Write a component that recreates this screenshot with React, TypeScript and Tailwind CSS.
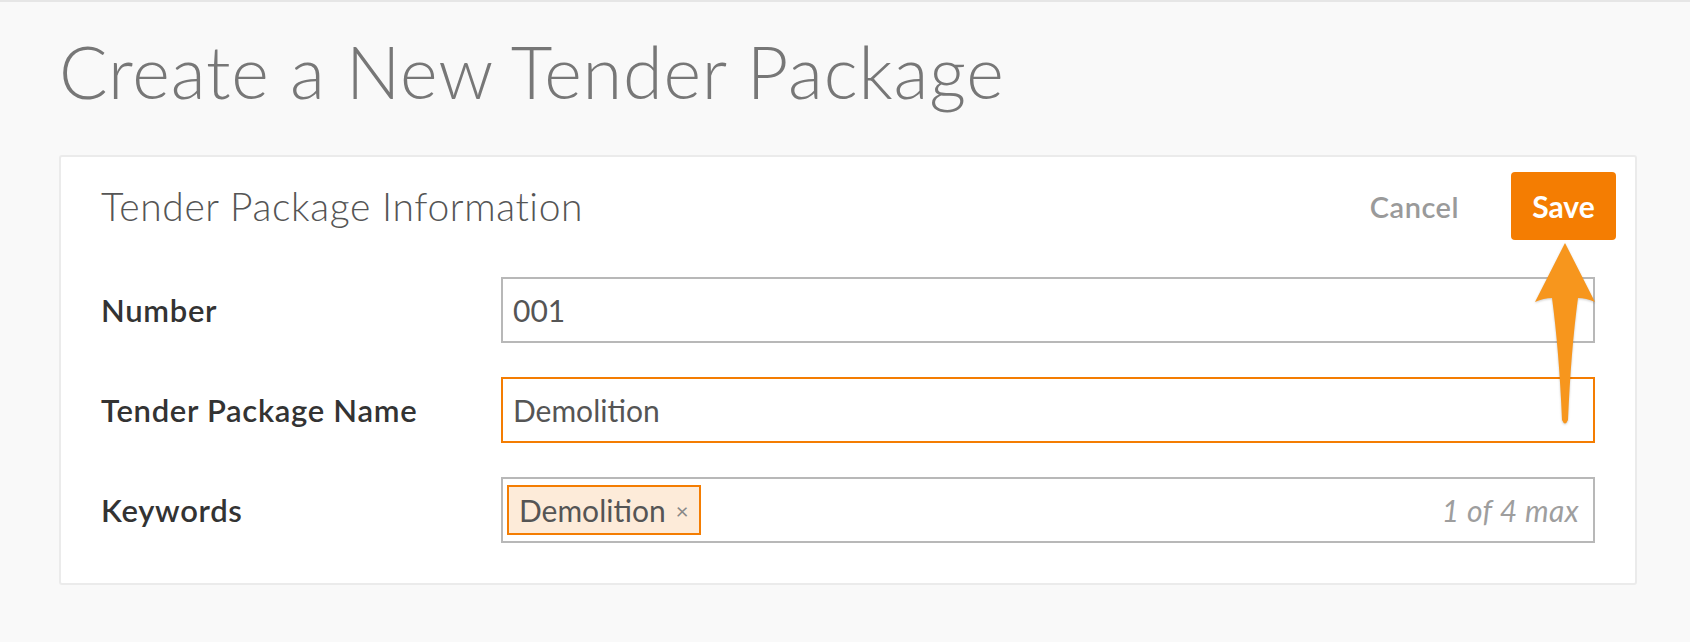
import React from 'react';

const font = { fontFamily: 'Lato, "Open Sans", sans-serif' };

const SaveArrow = () => (
  <svg
    width="70"
    height="190"
    viewBox="0 0 70 190"
    className="absolute left-[1469px] top-[83px] drop-shadow-[0_1px_1px_rgba(0,0,0,0.2)]"
  >
    <path
      d="M35 3 L65 62 Q56 58 48 58 Q41 110 38 180 Q35 187 32 180 Q29 110 22 58 Q14 58 5 62 Z"
      fill="#f7961d"
    />
  </svg>
);

const Row = ({ label, children }: { label: string; children: React.ReactNode }) => (
  <div className="grid grid-cols-[400px_1fr] items-center">
    <span className="text-[31px] leading-none font-semibold tracking-[0.7px] text-[#333]">{label}</span>
    {children}
  </div>
);

export default function App() {
  return (
    <div className="min-h-[642px] bg-[#f9f9f9] border-t-2 border-[#e6e6e6] pl-[59px]" style={font}>
      <h1 className="mt-[33px] h-[72px] text-[72px] leading-none font-light tracking-[0.8px] text-[#777]">
        Create a New Tender Package
      </h1>

      <div className="relative mt-[48px] w-[1578px] bg-white border-2 border-[#ebebeb] rounded-[3px] pb-[40px]">
        <SaveArrow />

        {/* header */}
        <div className="flex items-center pl-[40px] pr-[19px] pt-[15px]">
          <h2 className="text-[39px] leading-none font-light tracking-[0.6px] text-[#555]">
            Tender Package Information
          </h2>
          <button className="ml-auto text-[29px] leading-none font-semibold tracking-[0.5px] text-[#9a9a9a]">
            Cancel
          </button>
          <button className="ml-[52px] w-[105px] h-[68px] rounded-[4px] bg-[#f47d02] text-white text-[30px] leading-none font-bold">
            Save
          </button>
        </div>

        {/* form */}
        <div className="flex flex-col gap-[34px] pl-[40px] pr-[40px] mt-[37px]">
          <Row label="Number">
            <div className="h-[66px] border-2 border-[#b8b8b8] flex items-center px-[10px] text-[30px] text-[#555]">
              001
            </div>
          </Row>
          <Row label="Tender Package Name">
            <div className="h-[66px] border-2 border-[#f47d02] flex items-center px-[10px] text-[30px] text-[#555]">
              Demolition
            </div>
          </Row>
          <Row label="Keywords">
            <div className="h-[66px] border-2 border-[#b8b8b8] flex items-center pl-[4px] pr-[14px]">
              <span className="h-[50px] flex items-center gap-[10px] border-2 border-[#f47d02] bg-[#fdebd9] pl-[10px] pr-[11px] text-[30px] text-[#555]">
                Demolition
                <span className="text-[22px] text-[#888]">×</span>
              </span>
              <span className="ml-auto text-[30px] italic tracking-[0.4px] text-[#9e9e9e]">1 of 4 max</span>
            </div>
          </Row>
        </div>
      </div>
    </div>
  );
}
